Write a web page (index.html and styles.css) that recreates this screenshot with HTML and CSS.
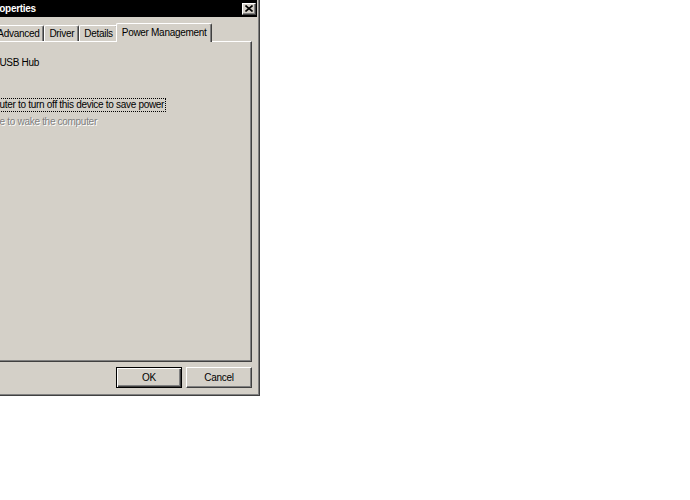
FILE: index.html
```html
<!DOCTYPE html>
<html lang="en">

<head>
    <meta charset="UTF-8">
    <meta name="viewport" content="width=device-width, initial-scale=1.0">
    <title>Generic USB Hub Properties</title>
    <link rel="stylesheet" href="styles.css">
</head>

<body>
    <div class="window">
        <div class="titlebar">
            <span class="title">Generic USB Hub Properties</span>
            <span class="close">
                <svg width="8" height="7" viewBox="0 0 8 7">
                    <path d="M0.5 0.5 L7.5 6.5 M7.5 0.5 L0.5 6.5" stroke="#000" stroke-width="1.6" fill="none"/>
                </svg>
            </span>
        </div>

        <div class="tabs">
            <div class="tab">General</div>
            <div class="tab">Power</div>
            <div class="tab">Advanced</div>
            <div class="tab">Driver</div>
            <div class="tab">Details</div>
            <div class="tab active">Power Management</div>
        </div>

        <div class="panel">
            <div class="device">
                <svg class="device-icon" width="32" height="32" viewBox="0 0 32 32">
                    <rect x="3" y="9" width="26" height="14" fill="#c0c0c0" stroke="#404040"/>
                    <path d="M9 16 H23 M19 13 L23 16 L19 19" stroke="#000" fill="none"/>
                </svg>
                <span>Generic USB Hub</span>
            </div>
            <div class="option">
                <span class="check">
                    <svg width="7" height="7" viewBox="0 0 7 7">
                        <path d="M0 3 L2 5 L7 0" stroke="#000" stroke-width="1.5" fill="none"/>
                    </svg>
                </span>
                <span class="label focus">Allow the computer to turn off this device to save power</span>
            </div>
            <div class="option disabled">
                <span class="check"></span>
                <span class="label">Allow this device to wake the computer</span>
            </div>
        </div>

        <div class="buttons">
            <button class="button default">OK</button>
            <button class="button">Cancel</button>
        </div>
    </div>
</body>

</html>
```

FILE: styles.css
```css
body {
    margin: 0;
    background-color: #ffffff;
    overflow: hidden;
    font-family: "Liberation Sans", Arial, sans-serif;
    font-size: 10px;
    letter-spacing: -0.3px;
    color: #000000;
}

/* dialog frame, left part runs off the screen */
.window {
    box-sizing: border-box;
    width: 357px;
    height: 400px;
    margin: -4px 0 0 -97px;
    padding: 2px;
    display: flex;
    flex-direction: column;
    background-color: #d4d0c8;
    border: 1px solid;
    border-color: #d4d0c8 #404040 #404040 #d4d0c8;
    box-shadow: inset 1px 1px #ffffff, inset -1px -1px #808080;
}

.titlebar {
    box-sizing: border-box;
    flex: none;
    height: 18px;
    padding: 1px 1px 0 2px;
    display: flex;
    align-items: center;
    justify-content: space-between;
    background-color: #000000;
}

.title {
    color: #ffffff;
    font-weight: bold;
    white-space: nowrap;
}

.close {
    box-sizing: border-box;
    width: 14px;
    height: 12px;
    display: flex;
    align-items: center;
    justify-content: center;
    background-color: #d4d0c8;
    border: 1px solid;
    border-color: #ffffff #404040 #404040 #ffffff;
    box-shadow: inset -1px -1px #808080;
}

/* tabs */
.tabs {
    flex: none;
    height: 18px;
    margin: 6px 5px 0 4px;
    padding-left: 2px;
    display: flex;
    align-items: flex-end;
    position: relative;
    z-index: 1;
}

.tab {
    box-sizing: border-box;
    height: 16px;
    padding: 1px 4px 0;
    line-height: 14px;
    white-space: nowrap;
    background-color: #d4d0c8;
    border-top: 1px solid #ffffff;
    border-left: 1px solid #ffffff;
    border-right: 1px solid #404040;
    border-radius: 2px 2px 0 0;
    box-shadow: inset -1px 0 #808080;
}

.tab.active {
    height: 19px;
    padding: 2px 5px 0;
    margin: 0 -2px -1px;
    position: relative;
    z-index: 1;
}

.panel {
    flex: 1;
    margin: 0 5px 0 4px;
    padding: 4px 8px;
    background-color: #d4d0c8;
    border: 1px solid;
    border-color: #ffffff #404040 #404040 #ffffff;
    box-shadow: inset -1px -1px #808080;
}

.device {
    height: 32px;
    display: flex;
    align-items: center;
    gap: 13px;
    white-space: nowrap;
}

.device-icon {
    flex: none;
}

.option {
    height: 17px;
    display: flex;
    align-items: center;
    gap: 2px;
    white-space: nowrap;
}

.device + .option {
    margin-top: 18px;
}

.check {
    box-sizing: border-box;
    flex: none;
    width: 13px;
    height: 13px;
    display: flex;
    align-items: center;
    justify-content: center;
    background-color: #ffffff;
    border: 1px solid;
    border-color: #808080 #ffffff #ffffff #808080;
    box-shadow: inset 1px 1px #404040, inset -1px -1px #d4d0c8;
}

.label {
    padding: 0 1px;
    line-height: 12px;
    border: 1px dotted transparent;
}

.label.focus {
    border-color: #000000;
}

.option.disabled .check {
    background-color: #d4d0c8;
}

.option.disabled .label {
    color: #808080;
    text-shadow: 1px 1px 0 #ffffff;
}

/* OK / Cancel */
.buttons {
    flex: none;
    margin: 5px 5px 5px 4px;
    display: flex;
    justify-content: flex-end;
    gap: 4px;
}

.button {
    box-sizing: border-box;
    width: 66px;
    height: 21px;
    padding: 0;
    font: inherit;
    letter-spacing: inherit;
    color: #000000;
    background-color: #d4d0c8;
    border: 1px solid;
    border-color: #ffffff #404040 #404040 #ffffff;
    box-shadow: inset -1px -1px #808080;
}

.button.default {
    border-color: #000000;
    box-shadow: inset 1px 1px #ffffff, inset -1px -1px #404040, inset -2px -2px #808080;
}
```
